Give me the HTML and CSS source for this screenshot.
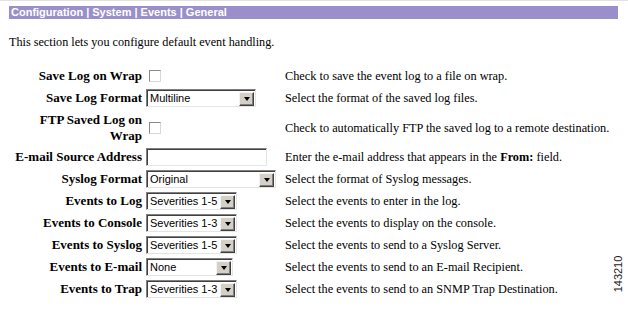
FILE: index.html
```html
<!DOCTYPE html>
<html>
<head>
<meta charset="utf-8">
<link rel="stylesheet" href="styles.css">
</head>
<body>
<div class="page">
  <div class="topline"></div>
  <div class="titlebar">Configuration | System | Events | General</div>
  <p class="intro">This section lets you configure default event handling.</p>
  <div class="form">
    <div class="lbl">Save Log on Wrap</div>
    <div class="ctl"><span class="chk"></span></div>
    <div class="desc">Check to save the event log to a file on wrap.</div>

    <div class="lbl">Save Log Format</div>
    <div class="ctl"><span class="sel w110"><span class="val">Multiline</span><span class="btn"><span class="tri"></span></span></span></div>
    <div class="desc">Select the format of the saved log files.</div>

    <div class="lbl two">FTP Saved Log on Wrap</div>
    <div class="ctl"><span class="chk"></span></div>
    <div class="desc">Check to automatically FTP the saved log to a remote destination.</div>

    <div class="lbl">E-mail Source Address</div>
    <div class="ctl"><span class="txt"></span></div>
    <div class="desc">Enter the e-mail address that appears in the <b>From:</b> field.</div>

    <div class="lbl">Syslog Format</div>
    <div class="ctl"><span class="sel w130"><span class="val">Original</span><span class="btn"><span class="tri"></span></span></span></div>
    <div class="desc">Select the format of Syslog messages.</div>

    <div class="lbl">Events to Log</div>
    <div class="ctl"><span class="sel w91"><span class="val">Severities 1-5</span><span class="btn"><span class="tri"></span></span></span></div>
    <div class="desc">Select the events to enter in the log.</div>

    <div class="lbl">Events to Console</div>
    <div class="ctl"><span class="sel w91"><span class="val">Severities 1-3</span><span class="btn"><span class="tri"></span></span></span></div>
    <div class="desc">Select the events to display on the console.</div>

    <div class="lbl">Events to Syslog</div>
    <div class="ctl"><span class="sel w91"><span class="val">Severities 1-5</span><span class="btn"><span class="tri"></span></span></span></div>
    <div class="desc">Select the events to send to a Syslog Server.</div>

    <div class="lbl">Events to E-mail</div>
    <div class="ctl"><span class="sel w87"><span class="val">None</span><span class="btn"><span class="tri"></span></span></span></div>
    <div class="desc">Select the events to send to an E-mail Recipient.</div>

    <div class="lbl">Events to Trap</div>
    <div class="ctl"><span class="sel w91"><span class="val">Severities 1-3</span><span class="btn"><span class="tri"></span></span></span></div>
    <div class="desc">Select the events to send to an SNMP Trap Destination.</div>
  </div>
  <div class="rule"></div>
  <div class="figno">143210</div>
</div>
</body>
</html>
```

FILE: styles.css
```css
html, body {
  margin: 0;
  padding: 0;
  background: #ffffff;
}
.page {
  position: relative;
  width: 628px;
  height: 309px;
  overflow: hidden;
  font-family: "Liberation Serif", "Times New Roman", serif;
  color: #000;
}
.topline {
  height: 1px;
  background: #e2e2e2;
}
.titlebar {
  margin: 5px 10px 0 9px;
  height: 13px;
  line-height: 13px;
  padding-left: 2px;
  background: #9b8fcb;
  color: #ffffff;
  font-family: "Liberation Sans", Arial, sans-serif;
  font-weight: bold;
  font-size: 11px;
  white-space: nowrap;
}
.intro {
  margin: 16px 0 0 9px;
  font-size: 12.2px;
  line-height: 14px;
  white-space: nowrap;
}
.form {
  margin: 18px 0 0 9px;
  display: grid;
  grid-template-columns: 133px 135px 1fr;
  column-gap: 4px;
  row-gap: 4px;
  align-items: center;
}
.lbl {
  text-align: right;
  font-weight: bold;
  font-size: 13px;
  line-height: 16px;
  min-height: 18px;
  display: flex;
  align-items: center;
  justify-content: flex-end;
}
.lbl.two {
  padding: 1px 0 0 30px;
}
.ctl {
  display: flex;
  align-items: center;
  height: 18px;
}
.desc {
  font-size: 12.3px;
  line-height: 16px;
  white-space: nowrap;
}
.chk {
  display: inline-block;
  box-sizing: border-box;
  width: 12px;
  height: 12px;
  margin-left: 3px;
  border: 1px solid;
  border-color: #8a8a8a #d8d8d8 #d8d8d8 #8a8a8a;
  background: #ffffff;
}
.sel, .txt {
  display: inline-flex;
  box-sizing: border-box;
  height: 18px;
  border: 1px solid;
  border-color: #808080 #e4e4e4 #e4e4e4 #808080;
  box-shadow: inset 1px 1px 0 #404040;
  background: #ffffff;
  align-items: center;
}
.txt {
  width: 121px;
}
.w110 { width: 110px; }
.w130 { width: 130px; }
.w91 { width: 91px; }
.w87 { width: 87px; }
.val {
  flex: 1;
  padding-left: 3px;
  font-family: "Liberation Sans", Arial, sans-serif;
  font-size: 11px;
  line-height: 14px;
  white-space: nowrap;
  overflow: hidden;
}
.btn {
  position: relative;
  box-sizing: border-box;
  width: 15px;
  height: 14px;
  margin: 1px 1px 0 0;
  background: #d4d0c8;
  border: 1px solid;
  border-color: #f4f4f4 #404040 #404040 #f4f4f4;
  box-shadow: inset -1px -1px 0 #808080;
  display: flex;
  align-items: center;
  justify-content: center;
}
.tri {
  width: 0;
  height: 0;
  border-left: 3.5px solid transparent;
  border-right: 3.5px solid transparent;
  border-top: 4px solid #000;
}
.rule {
  margin: 12px 8px 0 12px;
  height: 1px;
  background: #c8c8c8;
}
.figno {
  position: absolute;
  left: 597px;
  top: 268px;
  width: 42px;
  height: 12px;
  line-height: 12px;
  text-align: center;
  font-family: "Liberation Sans", Arial, sans-serif;
  font-size: 11px;
  color: #222;
  transform: rotate(-90deg);
}
```
